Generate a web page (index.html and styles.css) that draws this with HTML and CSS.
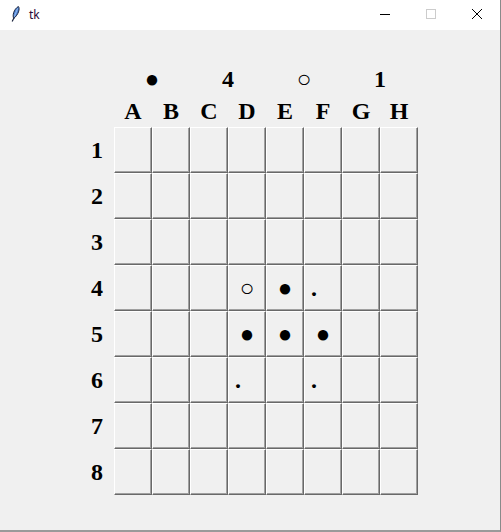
FILE: index.html
```html
<!DOCTYPE html>
<html>
<head>
<meta charset="utf-8">
<title>tk</title>
<link rel="stylesheet" href="styles.css">
</head>
<body>
<div class="window">
  <div class="titlebar">
    <svg class="feather" width="16" height="16" viewBox="0 0 16 16">
      <path d="M10.4 0.5 C12.2 2.6 10.4 8.6 5.8 12.4 C4.2 10 5.6 3.2 10.4 0.5 Z" fill="#4f86d8" stroke="#17203a" stroke-width="1"/>
      <path d="M9.6 2.4 L6.4 10.6" stroke="#a9c8f0" stroke-width="0.8" fill="none"/>
      <path d="M6 11.8 L4.2 15.4" stroke="#17203a" stroke-width="1.2" fill="none"/>
    </svg>
    <span class="title">tk</span>
    <div class="controls">
      <span class="ctl"><svg width="12" height="12" viewBox="0 0 12 12"><path d="M1 6.5 H11" stroke="#000" stroke-width="1"/></svg></span>
      <span class="ctl"><svg width="12" height="12" viewBox="0 0 12 12"><rect x="1.5" y="1.5" width="9" height="9" fill="none" stroke="#cccccc" stroke-width="1"/></svg></span>
      <span class="ctl"><svg width="12" height="12" viewBox="0 0 12 12"><path d="M1 1 L11 11 M11 1 L1 11" stroke="#000" stroke-width="1"/></svg></span>
    </div>
  </div>
  <div class="client">
    <div class="board">
      <div class="blank"></div>
      <div class="score">●</div>
      <div class="score">4</div>
      <div class="score">○</div>
      <div class="score">1</div>

      <div class="blank"></div>
      <div class="col">A</div><div class="col">B</div><div class="col">C</div><div class="col">D</div>
      <div class="col">E</div><div class="col">F</div><div class="col">G</div><div class="col">H</div>

      <div class="row">1</div>
      <div class="cell"></div><div class="cell"></div><div class="cell"></div><div class="cell"></div><div class="cell"></div><div class="cell"></div><div class="cell"></div><div class="cell"></div>

      <div class="row">2</div>
      <div class="cell"></div><div class="cell"></div><div class="cell"></div><div class="cell"></div><div class="cell"></div><div class="cell"></div><div class="cell"></div><div class="cell"></div>

      <div class="row">3</div>
      <div class="cell"></div><div class="cell"></div><div class="cell"></div><div class="cell"></div><div class="cell"></div><div class="cell"></div><div class="cell"></div><div class="cell"></div>

      <div class="row">4</div>
      <div class="cell"></div><div class="cell"></div><div class="cell"></div>
      <div class="cell"><span class="disc">○</span></div>
      <div class="cell"><span class="disc">●</span></div>
      <div class="cell"><span class="hint">.</span></div>
      <div class="cell"></div><div class="cell"></div>

      <div class="row">5</div>
      <div class="cell"></div><div class="cell"></div><div class="cell"></div>
      <div class="cell"><span class="disc">●</span></div>
      <div class="cell"><span class="disc">●</span></div>
      <div class="cell"><span class="disc">●</span></div>
      <div class="cell"></div><div class="cell"></div>

      <div class="row">6</div>
      <div class="cell"></div><div class="cell"></div><div class="cell"></div>
      <div class="cell"><span class="hint">.</span></div>
      <div class="cell"></div>
      <div class="cell"><span class="hint">.</span></div>
      <div class="cell"></div><div class="cell"></div>

      <div class="row">7</div>
      <div class="cell"></div><div class="cell"></div><div class="cell"></div><div class="cell"></div><div class="cell"></div><div class="cell"></div><div class="cell"></div><div class="cell"></div>

      <div class="row">8</div>
      <div class="cell"></div><div class="cell"></div><div class="cell"></div><div class="cell"></div><div class="cell"></div><div class="cell"></div><div class="cell"></div><div class="cell"></div>
    </div>
  </div>
</div>
</body>
</html>
```

FILE: styles.css
```css
* { box-sizing: border-box; }
html, body {
  margin: 0;
  padding: 0;
  background: #f0f0f0;
}
.window {
  width: 501px;
  height: 532px;
  border-right: 1px solid #8a8a8a;
  border-bottom: 2px solid #9a9a9a;
  display: flex;
  flex-direction: column;
  background: #f0f0f0;
}
.titlebar {
  height: 30px;
  background: #ffffff;
  display: flex;
  align-items: center;
  padding-left: 8px;
  flex: none;
}
.feather {
  display: block;
  margin-top: -2px;
}
.title {
  margin-left: 5px;
  font-family: "Noto Sans", "DejaVu Sans", sans-serif;
  font-size: 12px;
  color: #2a0838;
  line-height: 16px;
  margin-top: -1px;
}
.controls {
  margin-left: auto;
  display: flex;
  height: 30px;
}
.ctl {
  width: 46px;
  height: 30px;
  display: flex;
  align-items: center;
  justify-content: center;
}
.ctl svg { display: block; margin-top: -2px; }

.client {
  flex: 1;
  padding-top: 35px;
  padding-left: 80px;
}
.board {
  display: grid;
  grid-template-columns: 34px repeat(8, 38px);
  grid-template-rows: 32px 30px repeat(8, 46px);
  font-family: "Liberation Serif", "Times New Roman", serif;
  font-weight: bold;
  font-size: 24px;
  color: #000;
}
.score {
  grid-column: span 2;
  text-align: center;
  line-height: 28px;
}
.col {
  text-align: center;
  line-height: 28px;
}
.row {
  text-align: center;
  line-height: 46px;
}
.cell {
  background: #f0f0f0;
  border-top: 1px solid #ffffff;
  border-left: 1px solid #ffffff;
  border-right: 1px solid #696969;
  border-bottom: 1px solid #696969;
  box-shadow: inset -1px -1px 0 #a0a0a0;
  display: flex;
  align-items: center;
  justify-content: center;
  line-height: 46px;
}
.disc {
  line-height: 44px;
}
.hint {
  line-height: 44px;
  margin-right: 18px;
}
```
